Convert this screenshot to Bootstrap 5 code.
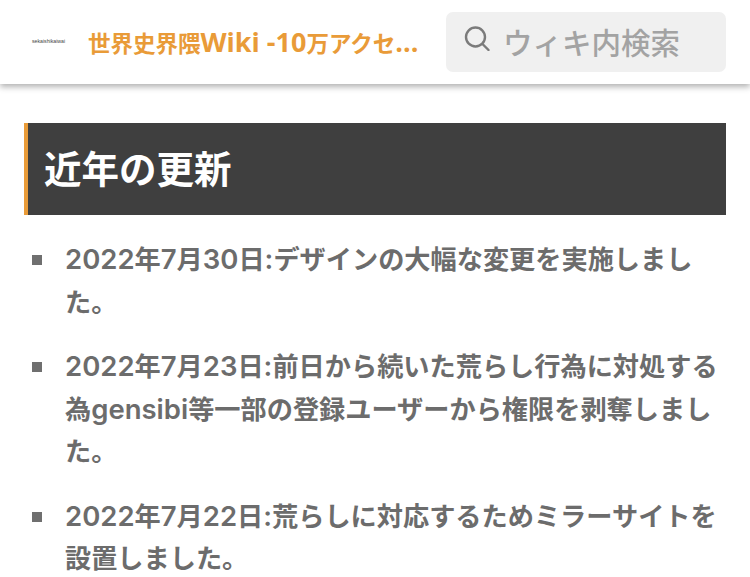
<!DOCTYPE html>
<html lang="ja">
<head>
  <meta charset="UTF-8">
  <meta name="viewport" content="width=device-width, initial-scale=1.0">
  <title>世界史界隈Wiki</title>
  <link rel="stylesheet" href="https://cdn.jsdelivr.net/npm/bootstrap@5.3.0/dist/css/bootstrap.min.css">
  <style>
    html, body {
      height: 577px;
      overflow: hidden;
    }
    body {
      background: #fff;
      font-family: "Inter", "Noto Sans CJK JP", sans-serif;
    }
    .site-head {
      height: 84px;
      padding: 12px 24px 12px 32px;
      box-shadow: 0 3px 6px rgba(0, 0, 0, 0.3);
    }
    .site-logo {
      width: 30px;
      flex: none;
      margin-right: 26px;
      font-family: "Liberation Sans", sans-serif;
      font-size: 5.2px;
      line-height: 1;
      color: #444;
      white-space: nowrap;
    }
    .site-title {
      width: 332px;
      flex: none;
      margin-right: 26px;
      color: #e99b38;
      font-family: "Open Sans", "Noto Sans CJK JP", sans-serif;
      font-size: 22.5px;
      font-weight: 700;
      white-space: nowrap;
    }
    .title-latin {
      font-size: 27px;
    }
    .search-box {
      width: 280px;
      height: 60px;
      flex: none;
      padding-left: 18px;
      gap: 13px;
      background: #f0f0f0;
      border-radius: 7px;
      color: #a3a3a3;
      font-family: "Noto Sans CJK JP", sans-serif;
      font-size: 29.5px;
      font-weight: 500;
      line-height: 1;
    }
    .search-box svg {
      flex: none;
      margin-bottom: 8px;
    }
    .page-body {
      padding: 39px 24px 0;
    }
    .section-title {
      height: 92px;
      margin: 0 0 24px;
      padding: 0 0 6px 16px;
      background: #3f3f3f;
      border-left: 4px solid #e99b38;
      color: #fff;
      font-family: "Noto Sans CJK JP", sans-serif;
      font-size: 37.5px;
      font-weight: 700;
    }
    .update-list {
      margin: 0;
      padding: 0 0 0 41px;
      list-style: none;
      color: #6c6c6c;
      font-size: 26.2px;
      font-weight: 700;
      line-height: 42.5px;
    }
    .update-list li {
      position: relative;
      margin-bottom: 22px;
    }
    .update-list li::before {
      content: "";
      position: absolute;
      left: -33px;
      top: 16px;
      width: 10px;
      height: 10px;
      background: #6f6f6f;
    }
    .latin-run {
      font-size: 27.5px;
      font-weight: 600;
      line-height: 1;
    }
  </style>
</head>
<body>
  <header class="site-head d-flex align-items-center bg-white">
    <div class="site-logo">sekaishikaiwai</div>
    <div class="site-title">世界史界隈<span class="title-latin">Wiki -10</span>万アクセ<span class="title-latin">...</span></div>
    <div class="search-box d-flex align-items-center">
      <svg width="26" height="26" viewBox="0 0 26 26" fill="none" stroke="#7b7b7b" stroke-width="2.4" stroke-linecap="round">
        <circle cx="11.5" cy="12" r="9.5"/>
        <path d="M18.5 19l6 6"/>
      </svg>
      <span>ウィキ内検索</span>
    </div>
  </header>

  <main class="page-body">
    <h2 class="section-title d-flex align-items-center">近年の更新</h2>
    <ul class="update-list">
      <li><span class="latin-run">2022</span>年<span class="latin-run">7</span>月<span class="latin-run">30</span>日<span class="latin-run">:</span>デザインの大幅な変更を実施しました。</li>
      <li><span class="latin-run">2022</span>年<span class="latin-run">7</span>月<span class="latin-run">23</span>日<span class="latin-run">:</span>前日から続いた荒らし行為に対処する為<span class="latin-run">gensibi</span>等一部の登録ユーザーから権限を剥奪しました。</li>
      <li><span class="latin-run">2022</span>年<span class="latin-run">7</span>月<span class="latin-run">22</span>日<span class="latin-run">:</span>荒らしに対応するためミラーサイトを設置しました。</li>
    </ul>
  </main>
</body>
</html>
